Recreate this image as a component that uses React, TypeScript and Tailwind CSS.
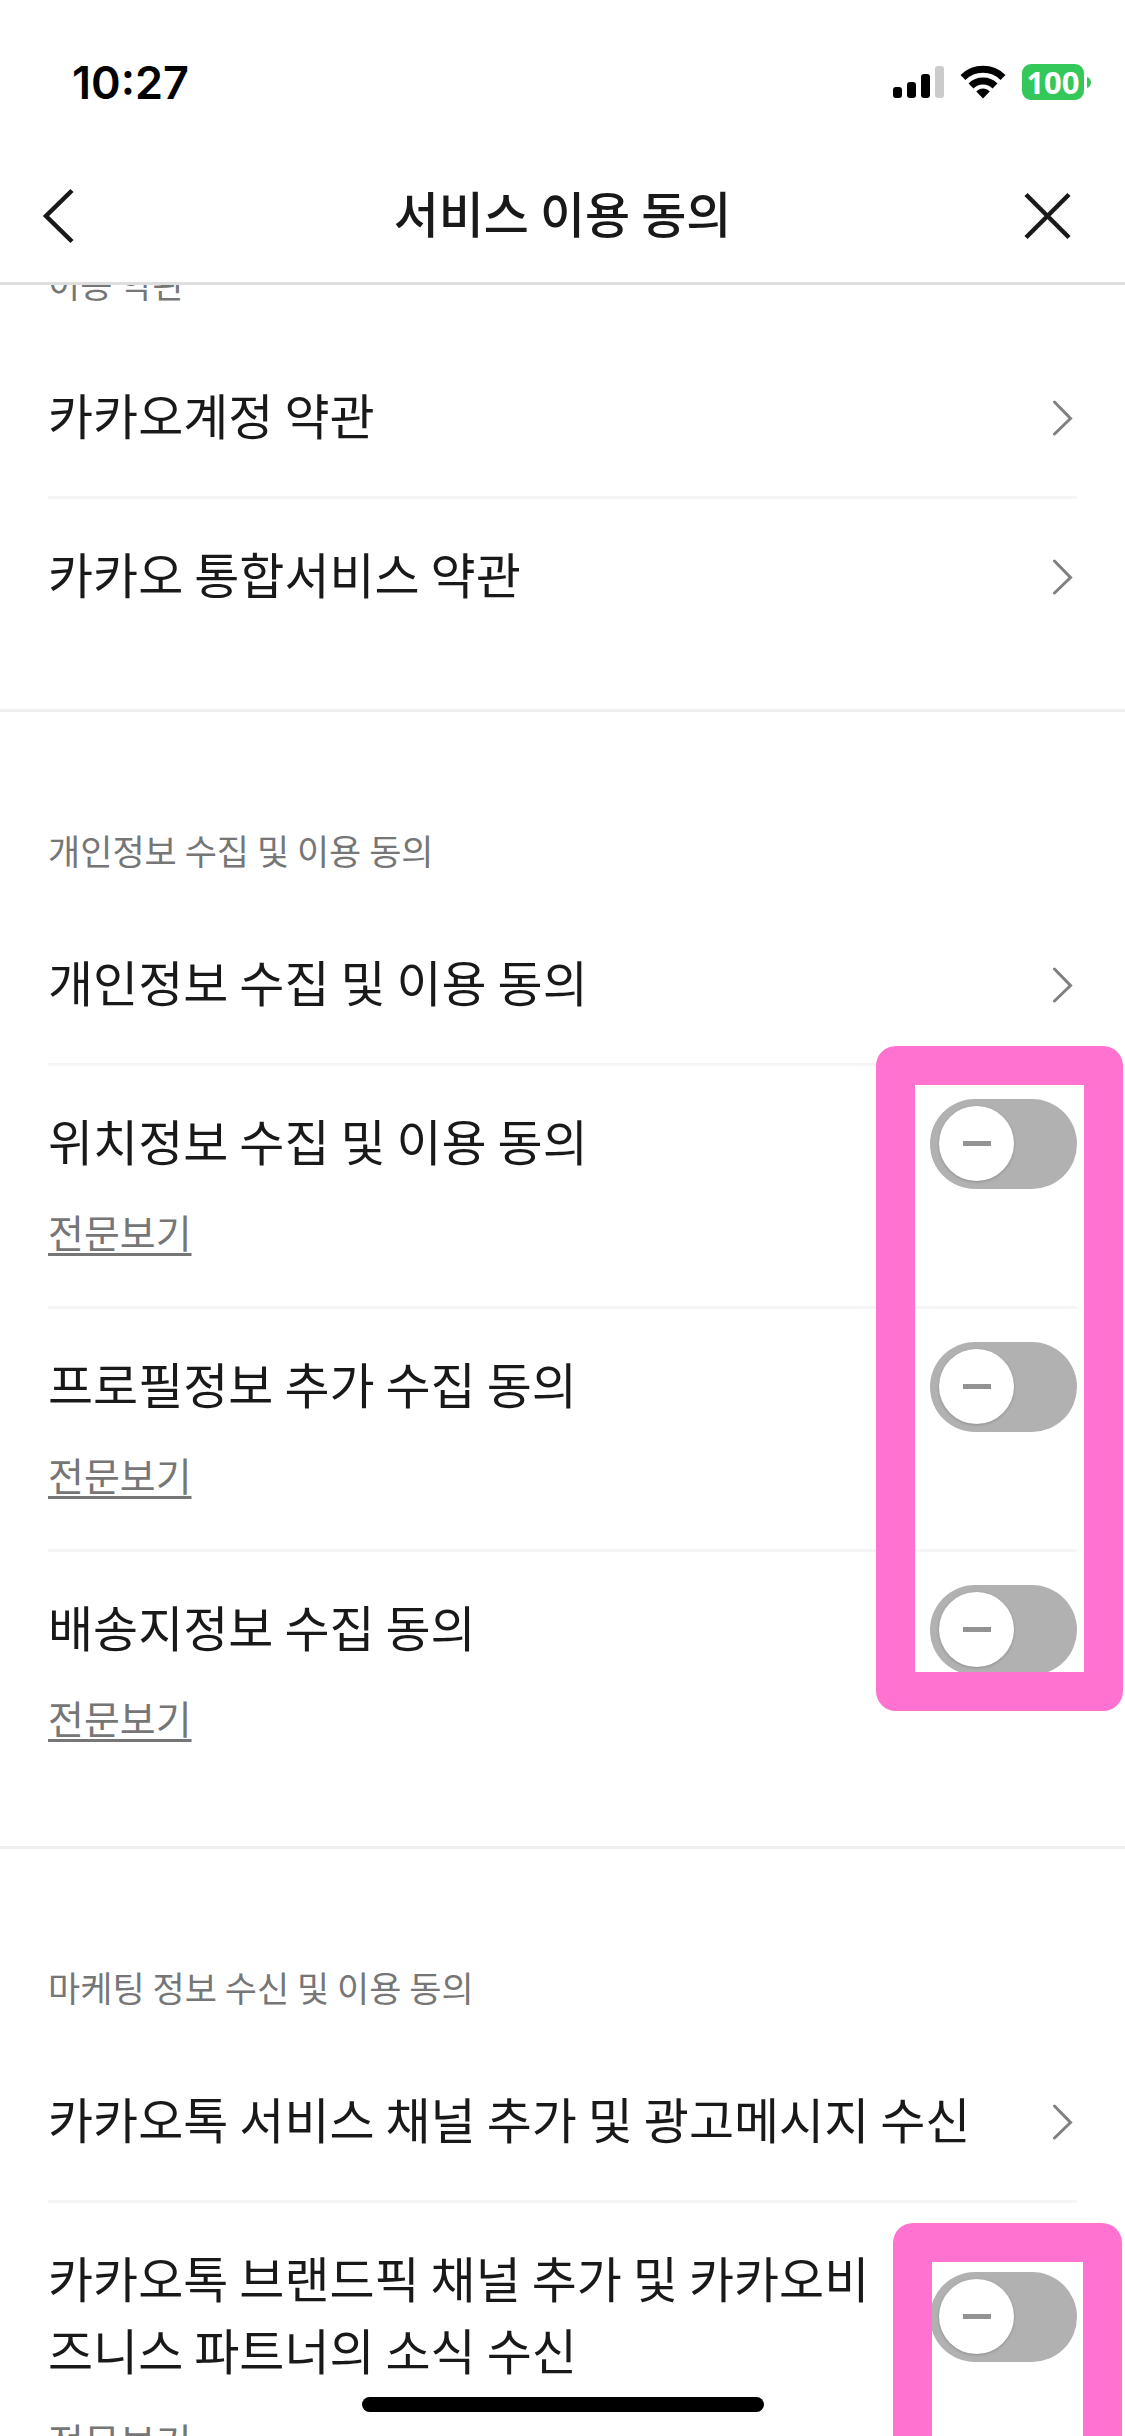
import { useId, useState } from 'react'

type Item = {
  title: string
  kind: 'link' | 'toggle'
}

type Section = {
  label: string
  items: Item[]
  highlight?: string
}

const SECTIONS: Section[] = [
  {
    label: '이용 약관',
    items: [
      { title: '카카오계정 약관', kind: 'link' },
      { title: '카카오 통합서비스 약관', kind: 'link' },
    ],
  },
  {
    label: '개인정보 수집 및 이용 동의',
    items: [
      { title: '개인정보 수집 및 이용 동의', kind: 'link' },
      { title: '위치정보 수집 및 이용 동의', kind: 'toggle' },
      { title: '프로필정보 추가 수집 동의', kind: 'toggle' },
      { title: '배송지정보 수집 동의', kind: 'toggle' },
    ],
    highlight: 'top-[334px] right-[2px] w-[247px] h-[665px]',
  },
  {
    label: '마케팅 정보 수신 및 이용 동의',
    items: [
      { title: '카카오톡 서비스 채널 추가 및 광고메시지 수신', kind: 'link' },
      { title: '카카오톡 브랜드픽 채널 추가 및 카카오비즈니스 파트너의 소식 수신', kind: 'toggle' },
    ],
    highlight: 'top-[374px] right-[3px] w-[229px] bottom-0',
  },
]

function StatusBar() {
  return (
    <div className="flex h-[150px] items-center justify-between pt-[14px] pr-[34px] pl-[72px]">
      <span className="font-['Inter',sans-serif] text-[45px] leading-none font-semibold text-black">10:27</span>
      <div className="flex items-center">
        <svg width="51" height="32" viewBox="0 0 51 32" className="mr-4">
          <rect x="0" y="21" width="9" height="11" rx="3" />
          <rect x="14" y="16" width="9" height="16" rx="3" />
          <rect x="28" y="8" width="9" height="24" rx="3" />
          <rect x="42" y="0" width="9" height="32" rx="3" fill="#cbcbcb" />
        </svg>
        <svg width="46" height="34" viewBox="0 0 46 34" className="mr-4">
          <path d="M3 12.5a28.5 28.5 0 0 1 40 0" fill="none" stroke="#000" strokeWidth="7" />
          <path d="M11 21a17 17 0 0 1 24 0" fill="none" stroke="#000" strokeWidth="7" />
          <path d="M23 33.500l-6.700-6.900c3.600-4 9.800-4 13.400 0z" />
        </svg>
        <div className="flex h-9 w-[62px] items-center justify-center rounded-[9px] bg-[#34c759] font-['Noto_Sans',sans-serif] text-[31px] leading-none font-bold text-white">
          100
        </div>
        <svg width="4" height="11" viewBox="0 0 4 11" className="ml-[3px]">
          <path d="M0 0c2.500.8 4 3 4 5.500s-1.500 4.700-4 5.500z" fill="#34c759" />
        </svg>
      </div>
    </div>
  )
}

function TitleBar() {
  return (
    <div className="grid h-[132px] grid-cols-[1fr_auto_1fr] items-center pr-[52px] pl-10">
      <button type="button" aria-label="뒤로" className="justify-self-start">
        <svg width="36" height="60" viewBox="0 0 36 60" fill="none" stroke="#191919" strokeWidth="4.500">
          <path d="M32 4.500 6 30l26 25.500" />
        </svg>
      </button>
      <h1 className="pb-2 pl-3 text-[49px] leading-[72px] font-medium">서비스 이용 동의</h1>
      <button type="button" aria-label="닫기" className="justify-self-end">
        <svg width="50" height="50" viewBox="0 0 50 50" fill="none" stroke="#191919" strokeWidth="4.500">
          <path d="M3 3.500l43 43M46 3.500l-43 43" />
        </svg>
      </button>
    </div>
  )
}

function Chevron() {
  return (
    <svg width="24" height="38" viewBox="0 0 24 38" fill="none" stroke="#808080" strokeWidth="3" strokeLinecap="round" className="shrink-0">
      <path d="M1.500 3 17.500 19.500 1.500 35" />
    </svg>
  )
}

function LinkRow({ title }: { title: string }) {
  return (
    <a href="#" className="flex items-center justify-between py-[33px]">
      <span className="pt-[5px] pb-[13px] text-[49px] leading-[72px]">{title}</span>
      <Chevron />
    </a>
  )
}

function ToggleRow({ title }: { title: string }) {
  const id = useId()
  const [on, setOn] = useState(false)

  return (
    <div className="pt-[33px] pb-11">
      <div className="flex items-center justify-between gap-12">
        <label htmlFor={id} className="pt-[5px] pb-[13px] text-[49px] leading-[72px]">
          {title}
        </label>
        <input
          id={id}
          type="checkbox"
          role="switch"
          checked={on}
          onChange={(e) => setOn(e.target.checked)}
          className="relative h-[90px] w-[147px] shrink-0 appearance-none rounded-full bg-[#b1b1b1] before:absolute before:top-[7px] before:left-[9px] before:size-[75px] before:rounded-full before:bg-white before:shadow-[0_1px_3px_rgba(0,0,0,0.2)] after:absolute after:top-[42px] after:left-[33px] after:h-[5px] after:w-7 after:bg-[#939393] checked:bg-[#fee500] checked:before:left-[62px] checked:after:left-[86px]"
        />
      </div>
      <div className="mt-[11px] flex">
        <a
          href="#"
          className="text-[39px] leading-[62px] text-[#767676] underline decoration-[3px] underline-offset-[5px] [text-decoration-skip-ink:none]"
        >
          전문보기
        </a>
      </div>
    </div>
  )
}

function AgreementSection({ label, items, highlight }: Section) {
  return (
    <section className="relative border-b-[3px] border-[#efefef] px-12 pb-[54px]">
      <h2 className="pt-[113px] pb-8 text-[35px] leading-[50px] text-[#767676]">{label}</h2>
      <ul className="divide-y-[3px] divide-[#f5f5f5]">
        {items.map((item) => (
          <li key={item.title}>
            {item.kind === 'link' ? <LinkRow title={item.title} /> : <ToggleRow title={item.title} />}
          </li>
        ))}
      </ul>
      {/* Marker around the switches */}
      {highlight && (
        <div className={`pointer-events-none absolute rounded-[20px] border-[39px] border-[#ff72d0] ${highlight}`} />
      )}
    </section>
  )
}

export default function App() {
  return (
    <div className="relative flex h-dvh flex-col overflow-hidden bg-white font-['Noto_Sans_CJK_KR',sans-serif] text-[#191919]">
      <header className="shrink-0 border-b-[3px] border-[#dedede]">
        <StatusBar />
        <TitleBar />
      </header>

      <main className="min-h-0 flex-1 overflow-y-auto [scrollbar-width:none]">
        {/* First section is partly scrolled under the header */}
        <div className="-mt-[140px]">
          {SECTIONS.map((section) => (
            <AgreementSection key={section.label} {...section} />
          ))}
        </div>
      </main>

      {/* Home indicator */}
      <div className="absolute bottom-6 left-1/2 h-[15px] w-[402px] -translate-x-1/2 rounded-full bg-black" />
    </div>
  )
}
